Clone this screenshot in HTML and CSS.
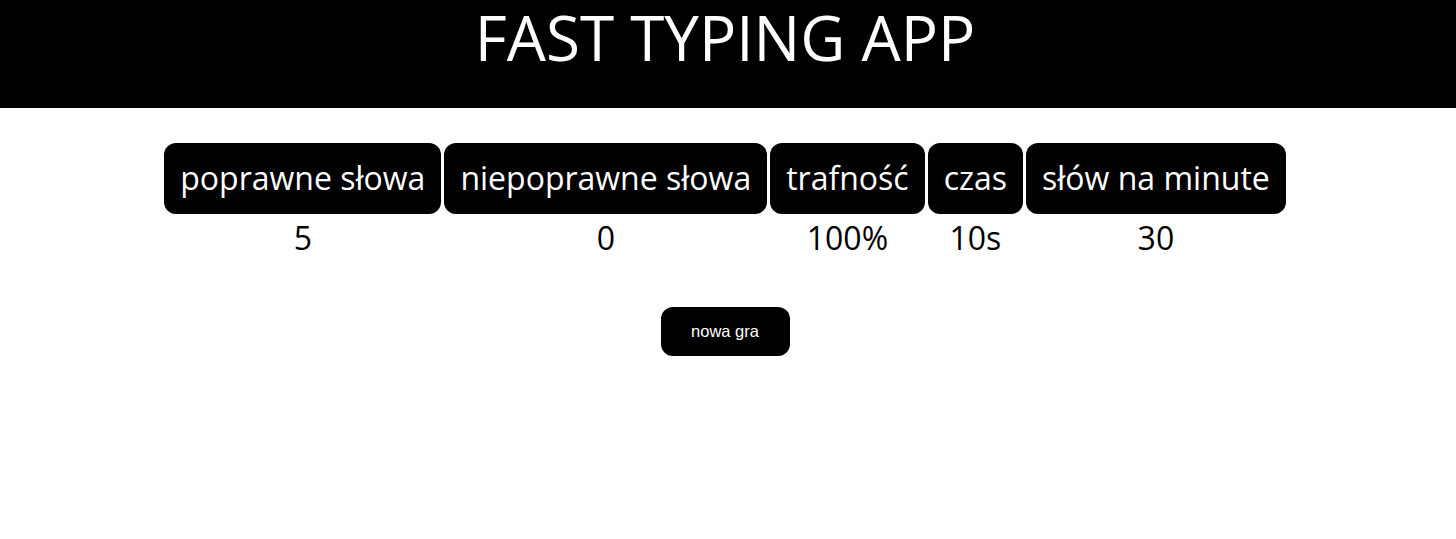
FILE: index.html
```html
<!DOCTYPE html>
<html lang="pl">
<head>
<meta charset="utf-8">
<title>Fast Typing App</title>
<link rel="stylesheet" href="styles.css">
</head>
<body>
<header class="topbar">
  <h1 class="title">FAST TYPING APP</h1>
</header>
<main class="content">
  <table class="stats">
    <thead>
      <tr>
        <th>poprawne słowa</th>
        <th>niepoprawne słowa</th>
        <th>trafność</th>
        <th>czas</th>
        <th>słów na minute</th>
      </tr>
    </thead>
    <tbody>
      <tr>
        <td>5</td>
        <td>0</td>
        <td>100%</td>
        <td>10s</td>
        <td>30</td>
      </tr>
    </tbody>
  </table>
  <button class="newgame">nowa gra</button>
</main>
</body>
</html>
```
FILE: styles.css
```css
html, body {
  margin: 0;
  padding: 0;
  background: #fff;
}
body {
  font-family: "Open Sans", "DejaVu Sans", sans-serif;
  color: #000;
}
.topbar {
  background: #000;
  height: 108px;
  display: flex;
  justify-content: center;
  padding-right: 6px;
}
.title {
  margin: 0;
  color: #fff;
  font-weight: 400;
  font-size: 62px;
  line-height: 75px;
  letter-spacing: 0;
}
.content {
  display: flex;
  flex-direction: column;
  align-items: center;
  padding-right: 6px;
}
.stats {
  margin-top: 32px;
  border-spacing: 3.5px;
  font-size: 32px;
}
.stats th {
  background: #000;
  color: #fff;
  font-weight: 400;
  border-radius: 12px;
  padding: 13px 16px 14px;
  line-height: 44px;
  white-space: nowrap;
}
.stats td {
  text-align: center;
  line-height: 42px;
  padding: 0;
}
.newgame {
  margin-top: 45px;
  background: #000;
  color: #fff;
  border: none;
  border-radius: 12px;
  width: 129px;
  height: 49px;
  font-family: "Liberation Sans", Arial, sans-serif;
  font-size: 16.5px;
  cursor: pointer;
}
```
